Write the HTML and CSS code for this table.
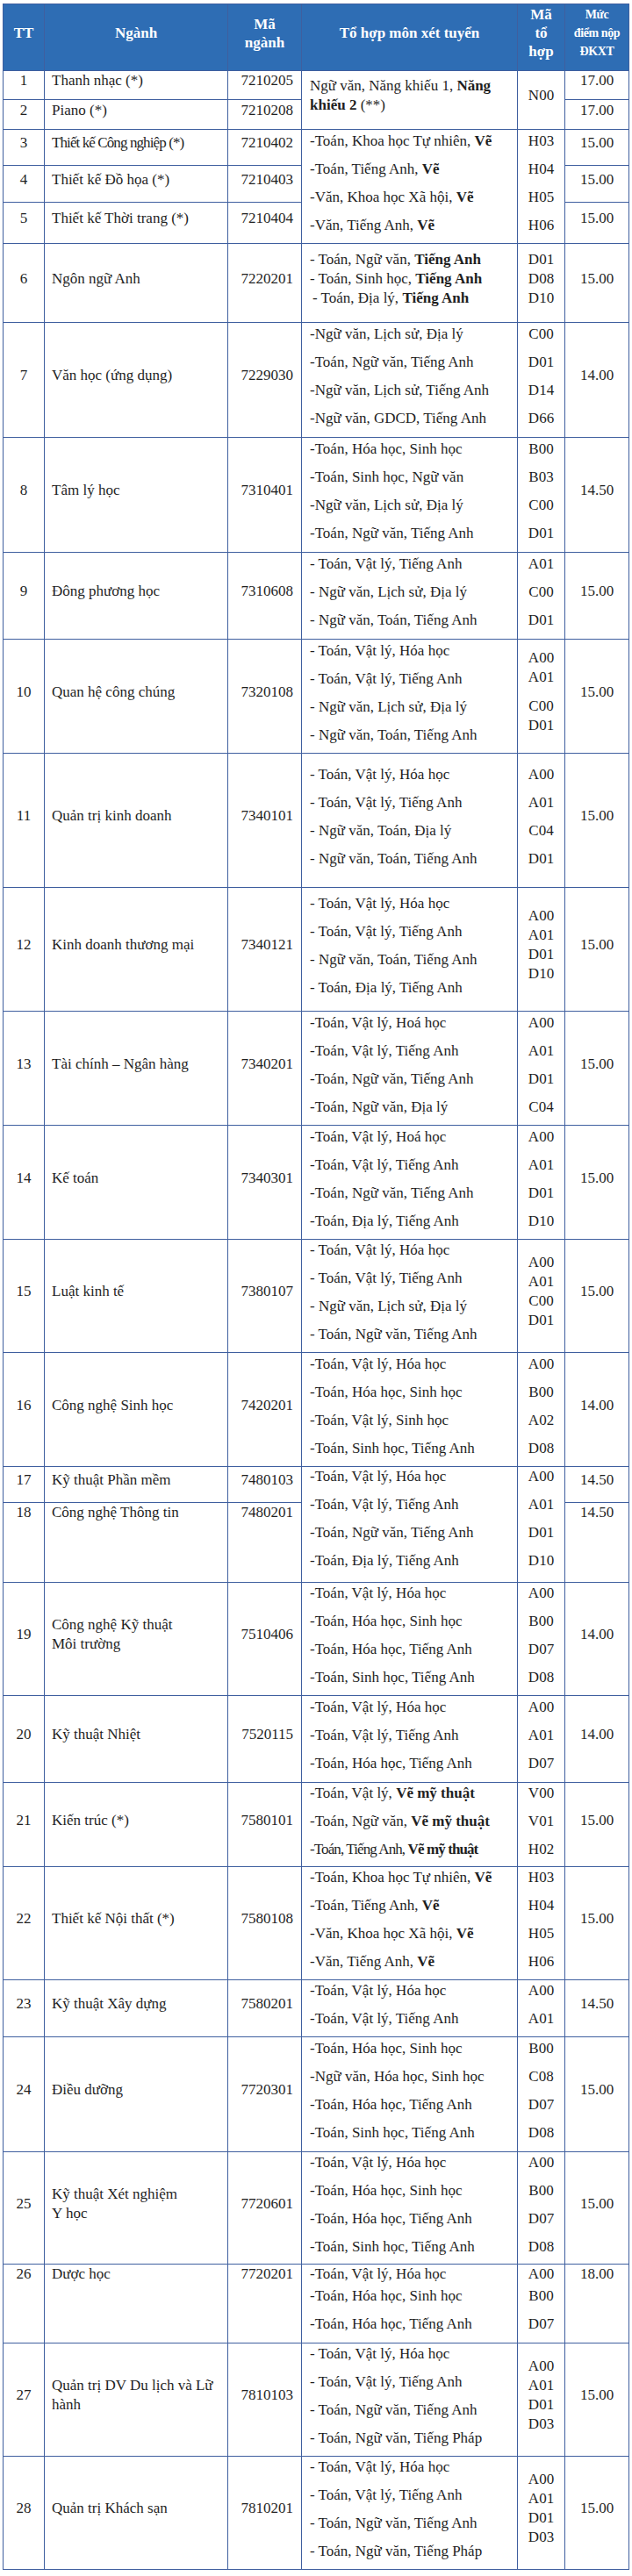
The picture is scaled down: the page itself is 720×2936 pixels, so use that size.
FILE: index.html
```html
<!DOCTYPE html>
<html lang="vi">
<head>
<meta charset="utf-8">
<title>Tổ hợp môn xét tuyển</title>
<link rel="stylesheet" href="styles.css">
</head>
<body>
<table class="tbl">
<colgroup>
<col class="c-tt"><col class="c-nganh"><col class="c-ma"><col class="c-th"><col class="c-mth"><col class="c-muc">
</colgroup>
<thead>
<tr class="h76">
<th>TT</th>
<th>Ngành</th>
<th>Mã<br>ngành</th>
<th>Tổ hợp môn xét tuyển</th>
<th>Mã<br>tổ<br>hợp</th>
<th class="cond-h">Mức<br>điểm nộp<br>ĐKXT</th>
</tr>
</thead>
<tbody>
<tr class="h33">
<td class="tt">1</td><td class="ng">Thanh nhạc (*)</td><td class="ma">7210205</td>
<td class="th tg" rowspan="2"><div class="ln">Ngữ văn, Năng khiếu 1, <b>Năng</b></div><div class="ln"><b>khiếu 2</b> (**)</div></td>
<td class="mth one" rowspan="2">N00</td>
<td class="muc">17.00</td>
</tr>
<tr class="h34">
<td class="tt">2</td><td class="ng">Piano (*)</td><td class="ma">7210208</td>
<td class="muc">17.00</td>
</tr>
<tr class="h41">
<td class="tt">3</td><td class="ng cond">Thiết kế Công nghiệp (*)</td><td class="ma">7210402</td>
<td class="th sp" rowspan="3"><div class="ln">-Toán, Khoa học Tự nhiên, <b>Vẽ</b></div><div class="ln">-Toán, Tiếng Anh, <b>Vẽ</b></div><div class="ln">-Văn, Khoa học Xã hội, <b>Vẽ</b></div><div class="ln">-Văn, Tiếng Anh, <b>Vẽ</b></div></td>
<td class="mth sp" rowspan="3"><div class="ln">H03</div><div class="ln">H04</div><div class="ln">H05</div><div class="ln">H06</div></td>
<td class="muc">15.00</td>
</tr>
<tr class="h42">
<td class="tt">4</td><td class="ng">Thiết kế Đồ họa (*)</td><td class="ma">7210403</td>
<td class="muc">15.00</td>
</tr>
<tr class="h47">
<td class="tt">5</td><td class="ng">Thiết kế Thời trang (*)</td><td class="ma">7210404</td>
<td class="muc">15.00</td>
</tr>
<tr class="h90">
<td class="tt">6</td><td class="ng">Ngôn ngữ Anh</td><td class="ma">7220201</td>
<td class="th tg"><div class="ln">- Toán, Ngữ văn, <b>Tiếng Anh</b></div><div class="ln">- Toán, Sinh học, <b>Tiếng Anh</b></div><div class="ln ind">- Toán, Địa lý, <b>Tiếng Anh</b></div></td>
<td class="mth tg"><div class="ln">D01</div><div class="ln">D08</div><div class="ln">D10</div></td>
<td class="muc">15.00</td>
</tr>
<tr class="h131">
<td class="tt">7</td><td class="ng">Văn học (ứng dụng)</td><td class="ma">7229030</td>
<td class="th sp"><div class="ln">-Ngữ văn, Lịch sử, Địa lý</div><div class="ln">-Toán, Ngữ văn, Tiếng Anh</div><div class="ln">-Ngữ văn, Lịch sử, Tiếng Anh</div><div class="ln">-Ngữ văn, GDCD, Tiếng Anh</div></td>
<td class="mth sp"><div class="ln">C00</div><div class="ln">D01</div><div class="ln">D14</div><div class="ln">D66</div></td>
<td class="muc">14.00</td>
</tr>
<tr class="h131">
<td class="tt">8</td><td class="ng">Tâm lý học</td><td class="ma">7310401</td>
<td class="th sp"><div class="ln">-Toán, Hóa học, Sinh học</div><div class="ln">-Toán, Sinh học, Ngữ văn</div><div class="ln">-Ngữ văn, Lịch sử, Địa lý</div><div class="ln">-Toán, Ngữ văn, Tiếng Anh</div></td>
<td class="mth sp"><div class="ln">B00</div><div class="ln">B03</div><div class="ln">C00</div><div class="ln">D01</div></td>
<td class="muc">14.50</td>
</tr>
<tr class="h99">
<td class="tt">9</td><td class="ng">Đông phương học</td><td class="ma">7310608</td>
<td class="th sp"><div class="ln">- Toán, Vật lý, Tiếng Anh</div><div class="ln">- Ngữ văn, Lịch sử, Địa lý</div><div class="ln">- Ngữ văn, Toán, Tiếng Anh</div></td>
<td class="mth sp"><div class="ln">A01</div><div class="ln">C00</div><div class="ln">D01</div></td>
<td class="muc">15.00</td>
</tr>
<tr class="h130">
<td class="tt">10</td><td class="ng">Quan hệ công chúng</td><td class="ma">7320108</td>
<td class="th sp"><div class="ln">- Toán, Vật lý, Hóa học</div><div class="ln">- Toán, Vật lý, Tiếng Anh</div><div class="ln">- Ngữ văn, Lịch sử, Địa lý</div><div class="ln">- Ngữ văn, Toán, Tiếng Anh</div></td>
<td class="mth tg"><div class="ln">A00</div><div class="ln">A01</div><div class="ln gap">C00</div><div class="ln">D01</div></td>
<td class="muc">15.00</td>
</tr>
<tr class="h153">
<td class="tt">11</td><td class="ng">Quản trị kinh doanh</td><td class="ma">7340101</td>
<td class="th sp"><div class="ln">- Toán, Vật lý, Hóa học</div><div class="ln">- Toán, Vật lý, Tiếng Anh</div><div class="ln">- Ngữ văn, Toán, Địa lý</div><div class="ln">- Ngữ văn, Toán, Tiếng Anh</div></td>
<td class="mth sp"><div class="ln">A00</div><div class="ln">A01</div><div class="ln">C04</div><div class="ln">D01</div></td>
<td class="muc">15.00</td>
</tr>
<tr class="h141">
<td class="tt">12</td><td class="ng">Kinh doanh thương mại</td><td class="ma">7340121</td>
<td class="th sp"><div class="ln">- Toán, Vật lý, Hóa học</div><div class="ln">- Toán, Vật lý, Tiếng Anh</div><div class="ln">- Ngữ văn, Toán, Tiếng Anh</div><div class="ln">- Toán, Địa lý, Tiếng Anh</div></td>
<td class="mth tg"><div class="ln">A00</div><div class="ln">A01</div><div class="ln">D01</div><div class="ln">D10</div></td>
<td class="muc">15.00</td>
</tr>
<tr class="h130">
<td class="tt">13</td><td class="ng">Tài chính – Ngân hàng</td><td class="ma">7340201</td>
<td class="th sp"><div class="ln">-Toán, Vật lý, Hoá học</div><div class="ln">-Toán, Vật lý, Tiếng Anh</div><div class="ln">-Toán, Ngữ văn, Tiếng Anh</div><div class="ln">-Toán, Ngữ văn, Địa lý</div></td>
<td class="mth sp"><div class="ln">A00</div><div class="ln">A01</div><div class="ln">D01</div><div class="ln">C04</div></td>
<td class="muc">15.00</td>
</tr>
<tr class="h130">
<td class="tt">14</td><td class="ng">Kế toán</td><td class="ma">7340301</td>
<td class="th sp"><div class="ln">-Toán, Vật lý, Hoá học</div><div class="ln">-Toán, Vật lý, Tiếng Anh</div><div class="ln">-Toán, Ngữ văn, Tiếng Anh</div><div class="ln">-Toán, Địa lý, Tiếng Anh</div></td>
<td class="mth sp"><div class="ln">A00</div><div class="ln">A01</div><div class="ln">D01</div><div class="ln">D10</div></td>
<td class="muc">15.00</td>
</tr>
<tr class="h129">
<td class="tt">15</td><td class="ng">Luật kinh tế</td><td class="ma">7380107</td>
<td class="th sp"><div class="ln">- Toán, Vật lý, Hóa học</div><div class="ln">- Toán, Vật lý, Tiếng Anh</div><div class="ln">- Ngữ văn, Lịch sử, Địa lý</div><div class="ln">- Toán, Ngữ văn, Tiếng Anh</div></td>
<td class="mth tg"><div class="ln">A00</div><div class="ln">A01</div><div class="ln">C00</div><div class="ln">D01</div></td>
<td class="muc">15.00</td>
</tr>
<tr class="h130">
<td class="tt">16</td><td class="ng">Công nghệ Sinh học</td><td class="ma">7420201</td>
<td class="th sp"><div class="ln">-Toán, Vật lý, Hóa học</div><div class="ln">-Toán, Hóa học, Sinh học</div><div class="ln">-Toán, Vật lý, Sinh học</div><div class="ln">-Toán, Sinh học, Tiếng Anh</div></td>
<td class="mth sp"><div class="ln">A00</div><div class="ln">B00</div><div class="ln">A02</div><div class="ln">D08</div></td>
<td class="muc">14.00</td>
</tr>
<tr class="h41">
<td class="tt">17</td><td class="ng">Kỹ thuật Phần mềm</td><td class="ma">7480103</td>
<td class="th sp top" rowspan="2"><div class="ln">-Toán, Vật lý, Hóa học</div><div class="ln">-Toán, Vật lý, Tiếng Anh</div><div class="ln">-Toán, Ngữ văn, Tiếng Anh</div><div class="ln">-Toán, Địa lý, Tiếng Anh</div></td>
<td class="mth sp top" rowspan="2"><div class="ln">A00</div><div class="ln">A01</div><div class="ln">D01</div><div class="ln">D10</div></td>
<td class="muc">14.50</td>
</tr>
<tr class="h91">
<td class="tt top">18</td><td class="ng top">Công nghệ Thông tin</td><td class="ma top">7480201</td>
<td class="muc top">14.50</td>
</tr>
<tr class="h129">
<td class="tt">19</td><td class="ng">Công nghệ Kỹ thuật<br>Môi trường</td><td class="ma">7510406</td>
<td class="th sp"><div class="ln">-Toán, Vật lý, Hóa học</div><div class="ln">-Toán, Hóa học, Sinh học</div><div class="ln">-Toán, Hóa học, Tiếng Anh</div><div class="ln">-Toán, Sinh học, Tiếng Anh</div></td>
<td class="mth sp"><div class="ln">A00</div><div class="ln">B00</div><div class="ln">D07</div><div class="ln">D08</div></td>
<td class="muc">14.00</td>
</tr>
<tr class="h99">
<td class="tt">20</td><td class="ng">Kỹ thuật Nhiệt</td><td class="ma">7520115</td>
<td class="th sp"><div class="ln">-Toán, Vật lý, Hóa học</div><div class="ln">-Toán, Vật lý, Tiếng Anh</div><div class="ln">-Toán, Hóa học, Tiếng Anh</div></td>
<td class="mth sp"><div class="ln">A00</div><div class="ln">A01</div><div class="ln">D07</div></td>
<td class="muc">14.00</td>
</tr>
<tr class="h96">
<td class="tt">21</td><td class="ng">Kiến trúc (*)</td><td class="ma">7580101</td>
<td class="th sp"><div class="ln">-Toán, Vật lý, <b>Vẽ mỹ thuật</b></div><div class="ln">-Toán, Ngữ văn, <b>Vẽ mỹ thuật</b></div><div class="ln cond">-Toán, Tiếng Anh, <b>Vẽ mỹ thuật</b></div></td>
<td class="mth sp"><div class="ln">V00</div><div class="ln">V01</div><div class="ln">H02</div></td>
<td class="muc">15.00</td>
</tr>
<tr class="h129">
<td class="tt">22</td><td class="ng">Thiết kế Nội thất (*)</td><td class="ma">7580108</td>
<td class="th sp"><div class="ln">-Toán, Khoa học Tự nhiên, <b>Vẽ</b></div><div class="ln">-Toán, Tiếng Anh, <b>Vẽ</b></div><div class="ln">-Văn, Khoa học Xã hội, <b>Vẽ</b></div><div class="ln">-Văn, Tiếng Anh, <b>Vẽ</b></div></td>
<td class="mth sp"><div class="ln">H03</div><div class="ln">H04</div><div class="ln">H05</div><div class="ln">H06</div></td>
<td class="muc">15.00</td>
</tr>
<tr class="h65">
<td class="tt">23</td><td class="ng">Kỹ thuật Xây dựng</td><td class="ma">7580201</td>
<td class="th sp"><div class="ln">-Toán, Vật lý, Hóa học</div><div class="ln">-Toán, Vật lý, Tiếng Anh</div></td>
<td class="mth sp"><div class="ln">A00</div><div class="ln">A01</div></td>
<td class="muc">14.50</td>
</tr>
<tr class="h131">
<td class="tt">24</td><td class="ng">Điều dưỡng</td><td class="ma">7720301</td>
<td class="th sp"><div class="ln">-Toán, Hóa học, Sinh học</div><div class="ln">-Ngữ văn, Hóa học, Sinh học</div><div class="ln">-Toán, Hóa học, Tiếng Anh</div><div class="ln">-Toán, Sinh học, Tiếng Anh</div></td>
<td class="mth sp"><div class="ln">B00</div><div class="ln">C08</div><div class="ln">D07</div><div class="ln">D08</div></td>
<td class="muc">15.00</td>
</tr>
<tr class="h128">
<td class="tt">25</td><td class="ng">Kỹ thuật Xét nghiệm<br>Y học</td><td class="ma">7720601</td>
<td class="th sp"><div class="ln">-Toán, Vật lý, Hóa học</div><div class="ln">-Toán, Hóa học, Sinh học</div><div class="ln">-Toán, Hóa học, Tiếng Anh</div><div class="ln">-Toán, Sinh học, Tiếng Anh</div></td>
<td class="mth sp"><div class="ln">A00</div><div class="ln">B00</div><div class="ln">D07</div><div class="ln">D08</div></td>
<td class="muc">15.00</td>
</tr>
<tr class="h90 r26">
<td class="tt top">26</td><td class="ng top">Dược học</td><td class="ma top">7720201</td>
<td class="th sp top"><div class="ln">-Toán, Vật lý, Hóa học</div><div class="ln">-Toán, Hóa học, Sinh học</div><div class="ln">-Toán, Hóa học, Tiếng Anh</div></td>
<td class="mth sp top"><div class="ln">A00</div><div class="ln">B00</div><div class="ln">D07</div></td>
<td class="muc top">18.00</td>
</tr>
<tr class="h129">
<td class="tt">27</td><td class="ng">Quản trị DV Du lịch và Lữ<br>hành</td><td class="ma">7810103</td>
<td class="th sp"><div class="ln">- Toán, Vật lý, Hóa học</div><div class="ln">- Toán, Vật lý, Tiếng Anh</div><div class="ln">- Toán, Ngữ văn, Tiếng Anh</div><div class="ln">- Toán, Ngữ văn, Tiếng Pháp</div></td>
<td class="mth tg"><div class="ln">A00</div><div class="ln">A01</div><div class="ln">D01</div><div class="ln">D03</div></td>
<td class="muc">15.00</td>
</tr>
<tr class="h129">
<td class="tt">28</td><td class="ng">Quản trị Khách sạn</td><td class="ma">7810201</td>
<td class="th sp"><div class="ln">- Toán, Vật lý, Hóa học</div><div class="ln">- Toán, Vật lý, Tiếng Anh</div><div class="ln">- Toán, Ngữ văn, Tiếng Anh</div><div class="ln">- Toán, Ngữ văn, Tiếng Pháp</div></td>
<td class="mth tg"><div class="ln">A00</div><div class="ln">A01</div><div class="ln">D01</div><div class="ln">D03</div></td>
<td class="muc">15.00</td>
</tr>
</tbody>
</table>
</body>
</html>
```

FILE: styles.css
```css
html, body {
  margin: 0;
  padding: 0;
  background: #ffffff;
}

body {
  font-family: "Liberation Serif", "Times New Roman", serif;
  font-size: 17px;
  color: #1f1f1f;
}

.tbl {
  border-collapse: collapse;
  table-layout: fixed;
  width: 714px;
  margin: 4px 0 0 3px;
}

.c-tt { width: 47px; }
.c-nganh { width: 209px; }
.c-ma { width: 84px; }
.c-th { width: 246px; }
.c-mth { width: 54px; }
.c-muc { width: 73px; }

.tbl th,
.tbl td {
  border: 1px solid #3f5f9f;
  padding: 0;
  vertical-align: middle;
  line-height: 22px;
}

.tbl th {
  background: #2e6db4;
  color: #ffffff;
  font-weight: bold;
  text-align: center;
  line-height: 21px;
  padding-bottom: 10px;
}

.tbl th.cond-h {
  font-size: 14px;
  letter-spacing: -0.4px;
  line-height: 21px;
}

.tbl td.tt { text-align: center; padding-bottom: 10px; }
.tbl td.ng { text-align: left; padding: 0 0 10px 8px; }
.tbl td.ma { text-align: right; padding: 0 9px 10px 0; }
.tbl td.muc { text-align: center; padding-bottom: 10px; }
.tbl td.th { text-align: left; padding-left: 9px; }
.tbl td.mth { text-align: center; }

.tbl td.one { padding-bottom: 10px; }
.tbl td.tg { padding-bottom: 10px; }

.sp .ln { margin-bottom: 10px; }
.sp .ln:last-child { margin-bottom: 8px; }

.ln.ind { padding-left: 3px; }
.ln.gap { margin-top: 11px; }

.cond { letter-spacing: -0.9px; }

.tbl td.top { vertical-align: top; padding-bottom: 0; }

.r26 .sp .ln:first-child { margin-bottom: 3px; }

.h33 { height: 33px; }
.h34 { height: 34px; }
.h41 { height: 41px; }
.h42 { height: 42px; }
.h47 { height: 47px; }
.h65 { height: 65px; }
.h76 { height: 76px; }
.h90 { height: 90px; }
.h91 { height: 91px; }
.h96 { height: 96px; }
.h99 { height: 99px; }
.h128 { height: 128px; }
.h129 { height: 129px; }
.h130 { height: 130px; }
.h131 { height: 131px; }
.h141 { height: 141px; }
.h153 { height: 153px; }
```
